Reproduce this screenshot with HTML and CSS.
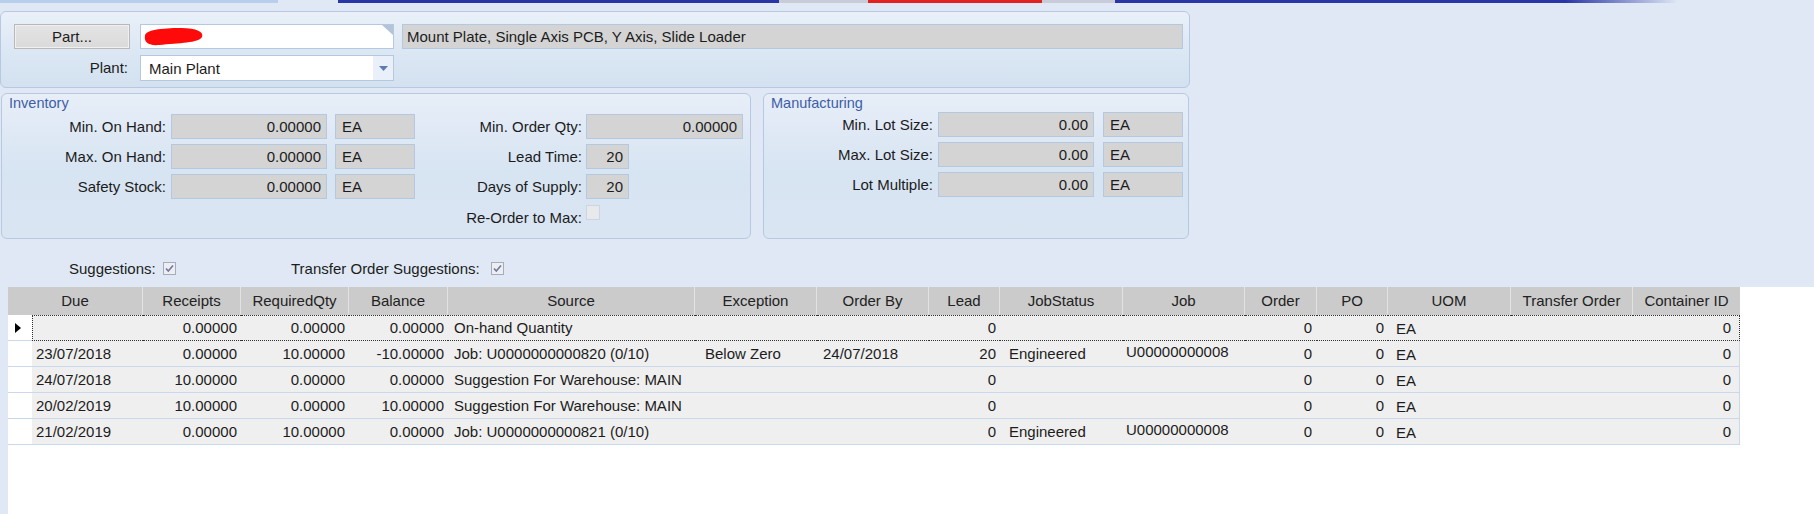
FILE: index.html
```html
<!DOCTYPE html>
<html lang="en">
<head>
<meta charset="utf-8">
<title>Part Planning</title>
<link rel="stylesheet" href="styles.css">
</head>
<body>
<div class="strip">
  <span class="s1"></span><span class="s2"></span><span class="s3"></span><span class="s4"></span><span class="s5"></span><span class="s6"></span><span class="s7"></span>
</div>

<div class="panel top">
  <div class="trow">
    <button class="btn">Part...</button>
    <div class="field white part">
      <svg class="redact" width="62" height="21" viewBox="0 0 62 21"><path d="M2 10 C 2 4, 18 2, 38 2 C 54 2, 61 6, 59 11 C 56 17, 36 17, 16 19 C 4 20, 1 15, 2 10 Z" fill="#ff0a0a"/></svg>
      <svg class="corner" width="11" height="10" viewBox="0 0 11 10"><path d="M0 0 H11 V10 Z" fill="#b4c4d8"/></svg>
    </div>
    <div class="field ro desc">Mount Plate, Single Axis PCB, Y Axis, Slide Loader</div>
  </div>
  <div class="trow second">
    <label class="plant">Plant:</label>
    <div class="field white combo">
      <span>Main Plant</span>
      <span class="drop"><svg width="9" height="5" viewBox="0 0 9 5"><path d="M0 0 H9 L4.5 5 Z" fill="#5b7db3"/></svg></span>
    </div>
  </div>
</div>

<div class="panels">
  <section class="panel inv">
    <div class="ptitle">Inventory</div>
    <div class="invgrid">
      <div class="lbl l1">Min. On Hand:</div>
      <div class="field ro num">0.00000</div>
      <div class="field ro uom">EA</div>
      <div class="lbl l2">Min. Order Qty:</div>
      <div class="field ro num">0.00000</div>

      <div class="lbl l1">Max. On Hand:</div>
      <div class="field ro num">0.00000</div>
      <div class="field ro uom">EA</div>
      <div class="lbl l2">Lead Time:</div>
      <div class="field ro num small">20</div>

      <div class="lbl l1">Safety Stock:</div>
      <div class="field ro num">0.00000</div>
      <div class="field ro uom">EA</div>
      <div class="lbl l2">Days of Supply:</div>
      <div class="field ro num small">20</div>

      <div class="lbl l2 reorder">Re-Order to Max:</div>
      <div class="cb-empty"></div>
    </div>
  </section>

  <section class="panel mfg">
    <div class="ptitle">Manufacturing</div>
    <div class="mfggrid">
      <div class="lbl l1">Min. Lot Size:</div>
      <div class="field ro num">0.00</div>
      <div class="field ro uom">EA</div>

      <div class="lbl l1">Max. Lot Size:</div>
      <div class="field ro num">0.00</div>
      <div class="field ro uom">EA</div>

      <div class="lbl l1">Lot Multiple:</div>
      <div class="field ro num">0.00</div>
      <div class="field ro uom">EA</div>
    </div>
  </section>
</div>

<div class="sugg">
  <span class="sl1">Suggestions:</span>
  <svg class="cb" width="13" height="13" viewBox="0 0 13 13"><rect x="0.5" y="0.5" width="12" height="12" fill="#eeeeee" stroke="#a3adc0"/><path d="M3 6.5 L5.3 9 L10 3.5" fill="none" stroke="#6e78a6" stroke-width="1.6"/></svg>
  <span class="sl2">Transfer Order Suggestions:</span>
  <svg class="cb" width="13" height="13" viewBox="0 0 13 13"><rect x="0.5" y="0.5" width="12" height="12" fill="#eeeeee" stroke="#a3adc0"/><path d="M3 6.5 L5.3 9 L10 3.5" fill="none" stroke="#6e78a6" stroke-width="1.6"/></svg>
</div>

<div class="gridwrap">
  <div class="tbl">
    <div class="tr hdr">
      <div class="th first">Due</div>
      <div class="th">Receipts</div>
      <div class="th">RequiredQty</div>
      <div class="th">Balance</div>
      <div class="th">Source</div>
      <div class="th">Exception</div>
      <div class="th">Order By</div>
      <div class="th">Lead</div>
      <div class="th">JobStatus</div>
      <div class="th">Job</div>
      <div class="th">Order</div>
      <div class="th">PO</div>
      <div class="th">UOM</div>
      <div class="th">Transfer Order</div>
      <div class="th">Container ID</div>
    </div>

    <div class="tr focus">
      <div class="sel"><svg width="6" height="10" viewBox="0 0 6 10"><path d="M0 0 L6 5 L0 10 Z" fill="#000"/></svg></div>
      <div class="td l c-due"></div>
      <div class="td r">0.00000</div>
      <div class="td r">0.00000</div>
      <div class="td r">0.00000</div>
      <div class="td l c-src">On-hand Quantity</div>
      <div class="td l c-exc"></div>
      <div class="td l c-ob"></div>
      <div class="td r">0</div>
      <div class="td l c-js"></div>
      <div class="td l c-job"></div>
      <div class="td r c-ord">0</div>
      <div class="td r">0</div>
      <div class="td l c-uom">EA</div>
      <div class="td l"></div>
      <div class="td r c-cid last">0</div>
    </div>

    <div class="tr">
      <div class="sel"></div>
      <div class="td l c-due">23/07/2018</div>
      <div class="td r">0.00000</div>
      <div class="td r">10.00000</div>
      <div class="td r">-10.00000</div>
      <div class="td l c-src">Job: U0000000000820 (0/10)</div>
      <div class="td l c-exc">Below Zero</div>
      <div class="td l c-ob">24/07/2018</div>
      <div class="td r">20</div>
      <div class="td l c-js">Engineered</div>
      <div class="td l c-job">U00000000008</div>
      <div class="td r c-ord">0</div>
      <div class="td r">0</div>
      <div class="td l c-uom">EA</div>
      <div class="td l"></div>
      <div class="td r c-cid last">0</div>
    </div>

    <div class="tr">
      <div class="sel"></div>
      <div class="td l c-due">24/07/2018</div>
      <div class="td r">10.00000</div>
      <div class="td r">0.00000</div>
      <div class="td r">0.00000</div>
      <div class="td l c-src">Suggestion For Warehouse: MAIN</div>
      <div class="td l c-exc"></div>
      <div class="td l c-ob"></div>
      <div class="td r">0</div>
      <div class="td l c-js"></div>
      <div class="td l c-job"></div>
      <div class="td r c-ord">0</div>
      <div class="td r">0</div>
      <div class="td l c-uom">EA</div>
      <div class="td l"></div>
      <div class="td r c-cid last">0</div>
    </div>

    <div class="tr">
      <div class="sel"></div>
      <div class="td l c-due">20/02/2019</div>
      <div class="td r">10.00000</div>
      <div class="td r">0.00000</div>
      <div class="td r">10.00000</div>
      <div class="td l c-src">Suggestion For Warehouse: MAIN</div>
      <div class="td l c-exc"></div>
      <div class="td l c-ob"></div>
      <div class="td r">0</div>
      <div class="td l c-js"></div>
      <div class="td l c-job"></div>
      <div class="td r c-ord">0</div>
      <div class="td r">0</div>
      <div class="td l c-uom">EA</div>
      <div class="td l"></div>
      <div class="td r c-cid last">0</div>
    </div>

    <div class="tr">
      <div class="sel"></div>
      <div class="td l c-due">21/02/2019</div>
      <div class="td r">0.00000</div>
      <div class="td r">10.00000</div>
      <div class="td r">0.00000</div>
      <div class="td l c-src">Job: U0000000000821 (0/10)</div>
      <div class="td l c-exc"></div>
      <div class="td l c-ob"></div>
      <div class="td r">0</div>
      <div class="td l c-js">Engineered</div>
      <div class="td l c-job">U00000000008</div>
      <div class="td r c-ord">0</div>
      <div class="td r">0</div>
      <div class="td l c-uom">EA</div>
      <div class="td l"></div>
      <div class="td r c-cid last">0</div>
    </div>
  </div>
</div>
</body>
</html>
```

FILE: styles.css
```css
* { box-sizing: border-box; }

html, body {
  margin: 0;
  height: 514px;
  overflow: hidden;
}

body {
  background: #dfe8f4;
  font-family: "Liberation Sans", Arial, sans-serif;
  font-size: 15px;
  color: #1c1c1c;
}

/* top colour strip */
.strip { display: flex; height: 3px; }
.strip span { display: block; height: 3px; }
.s1 { width: 278px; background: #b7cfec; }
.s2 { width: 60px; background: #dfe8f4; }
.s3 { width: 441px; background: #2b36a6; }
.s4 { width: 89px; background: #c8ccd8; }
.s5 { width: 174px; background: #e2221f; }
.s6 { width: 73px; background: #c8ccd8; }
.s7 { width: 563px; background: linear-gradient(90deg, #2b36a6 80%, #dfe8f4); }

/* panels */
.panel {
  border: 1px solid #b6c9e0;
  border-radius: 6px;
  background: linear-gradient(#e7eef8, #d7e4f2 55%, #dae5f2);
}

.top {
  margin-top: 8px;
  width: 1190px;
  height: 77px;
  padding: 12px 6px 0 13px;
  background: linear-gradient(#e9f0f9, #dae6f3 60%, #d3e1f0);
}

.trow { display: flex; height: 25px; }
.trow.second { margin-top: 6px; height: 26px; }

.btn {
  width: 116px;
  height: 25px;
  margin: 0;
  padding: 0;
  font: inherit;
  color: #1c1c1c;
  background: linear-gradient(#e4e4e4, #dadada);
  border: 1px solid #b9b9b9;
  box-shadow: inset 0 0 0 1px #f0f0f0;
}

.field {
  display: flex;
  align-items: center;
  border: 1px solid #b4c8e0;
  white-space: nowrap;
  overflow: hidden;
}

.white { background: #ffffff; }
.ro { background: #d4d4d4; }

.part {
  position: relative;
  width: 254px;
  margin-left: 10px;
  padding-left: 2px;
}
.part .corner { position: absolute; top: 0; right: 0; }

.desc {
  width: 781px;
  margin-left: 8px;
  padding-left: 4px;
}

.plant {
  width: 116px;
  text-align: right;
  padding-right: 2px;
  line-height: 26px;
}

.combo {
  width: 254px;
  margin-left: 10px;
  padding-left: 8px;
}
.combo .drop {
  margin-left: auto;
  width: 20px;
  height: 24px;
  display: flex;
  align-items: center;
  justify-content: center;
  background: #e9f0f9;
}

/* inventory / manufacturing */
.panels {
  display: flex;
  gap: 12px;
  margin-top: 5px;
  padding-left: 1px;
}

.inv { width: 750px; height: 146px; }
.mfg { width: 426px; height: 146px; }

.ptitle {
  color: #3d5ea7;
  font-size: 14.5px;
  line-height: 18px;
  padding-left: 7px;
}

.invgrid {
  display: grid;
  grid-template-columns: 169px 156px 88px 171px 157px;
  grid-auto-rows: 25px;
  row-gap: 5px;
  margin-top: 2px;
}

.mfggrid {
  display: grid;
  grid-template-columns: 174px 156px 89px;
  grid-auto-rows: 25px;
  row-gap: 5px;
}

.lbl {
  text-align: right;
  line-height: 25px;
  white-space: nowrap;
}
.l1 { padding-right: 5px; }
.l2 { padding-right: 4px; }

.num { justify-content: flex-end; padding-right: 5px; }
.uom { width: 80px; margin-left: 8px; padding-left: 6px; }
.mfggrid .uom { margin-left: 9px; }
.small { width: 43px; }

.reorder { grid-column: 4; line-height: 27px; }
.cb-empty {
  width: 14px;
  height: 15px;
  margin-top: 1px;
  background: #e7e9ec;
  border: 1px solid #cdd5df;
}

/* suggestions row */
.sugg {
  display: flex;
  align-items: center;
  height: 18px;
  margin-top: 20px;
  padding-left: 69px;
}
.sl1 { width: 94px; }
.sl2 { width: 200px; margin-left: 115px; }
.cb { display: block; }

/* grid */
.gridwrap {
  margin-top: 10px;
  margin-left: 8px;
  height: 240px;
  background: #ffffff;
}

.tbl { width: 1732px; }

.tr {
  display: grid;
  grid-template-columns: 24px 111px 98px 108px 99px 247px 122px 112px 71px 123px 122px 72px 71px 123px 122px 107px;
  height: 26px;
}

.hdr { height: 28px; }

.th {
  background: #cbcbcb;
  border-right: 1px solid #e2e2e2;
  text-align: center;
  line-height: 28px;
  color: #222;
  white-space: nowrap;
  overflow: hidden;
}
.th.first { grid-column: span 2; }
.th:last-child { border-right: none; }

.sel {
  background: #ffffff;
  border-bottom: 1px solid #c9d8ea;
  display: flex;
  align-items: center;
  padding-left: 7px;
}

.td {
  background: #efefef;
  border-bottom: 1px solid #c9d8ea;
  line-height: 25px;
  white-space: nowrap;
  overflow: hidden;
  color: #1c1c1c;
}
.td.r { text-align: right; padding-right: 4px; }
.td.l { padding-left: 4px; }
.td.last { border-right: 1px solid #c9d8ea; }

.c-src { padding-left: 6px !important; }
.c-exc { padding-left: 10px !important; }
.c-ob { padding-left: 6px !important; }
.c-js { padding-left: 9px !important; }
.c-job { padding-left: 3px !important; line-height: 21px; }
.c-ord { padding-right: 5px !important; }
.c-uom { padding-left: 8px !important; padding-top: 1px; }
.c-cid { padding-right: 8px !important; }

.focus .td {
  border-top: 1px dotted #333;
  border-bottom: 1px dotted #333;
  line-height: 23px;
}
.focus .td:nth-child(2) { border-left: 1px dotted #333; }
.focus .td.last { border-right: 1px dotted #333; }
.focus .c-job { line-height: 19px; }
```
